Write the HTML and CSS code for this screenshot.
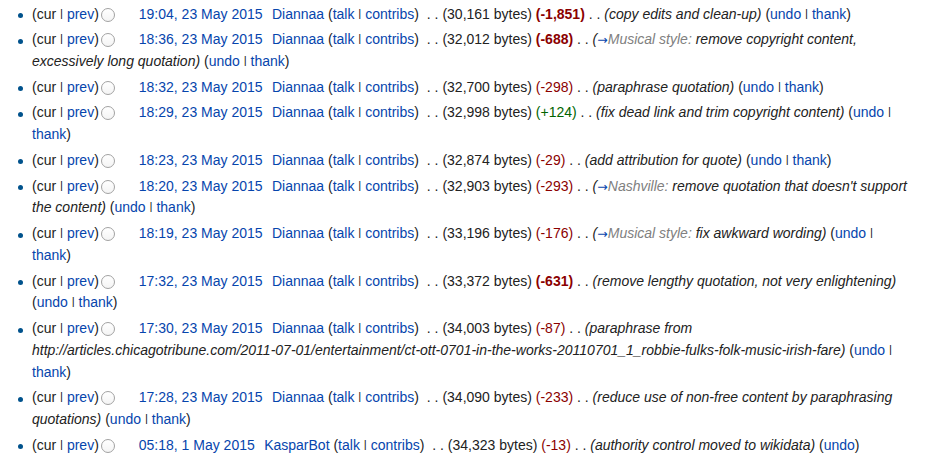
FILE: index.html
```html
<!DOCTYPE html>
<html lang="en">
<head>
<meta charset="utf-8">
<title>Revision history</title>
<link rel="stylesheet" href="styles.css">
</head>
<body>
<main class="history">
<ul class="revisions">
<li><span class="histlinks">(cur <span class="bar">|</span> <a href="#">prev</a>)</span><input type="radio" name="oldid" class="pick"><a class="date" href="#">19:04, 23 May 2015</a> <span class="user"><a href="#">Diannaa</a> <span class="tools">(<a href="#">talk</a> <span class="bar">|</span> <a href="#">contribs</a>)</span></span> <span class="sep">. .</span> <span class="size">(30,161 bytes)</span> <strong class="delta neg">(-1,851)</strong> <span class="sep">. .</span> <span class="comment">(copy edits and clean-up)</span> <span class="tools">(<a href="#">undo</a> <span class="bar">|</span> <a href="#">thank</a>)</span></li>
<li><span class="histlinks">(cur <span class="bar">|</span> <a href="#">prev</a>)</span><input type="radio" name="oldid" class="pick"><a class="date" href="#">18:36, 23 May 2015</a> <span class="user"><a href="#">Diannaa</a> <span class="tools">(<a href="#">talk</a> <span class="bar">|</span> <a href="#">contribs</a>)</span></span> <span class="sep">. .</span> <span class="size">(32,012 bytes)</span> <strong class="delta neg">(-688)</strong> <span class="sep">. .</span> <span class="comment">(<a class="section" href="#">→</a><span class="autocomment">Musical style:</span> remove copyright content, excessively long quotation)</span> <span class="tools">(<a href="#">undo</a> <span class="bar">|</span> <a href="#">thank</a>)</span></li>
<li><span class="histlinks">(cur <span class="bar">|</span> <a href="#">prev</a>)</span><input type="radio" name="oldid" class="pick"><a class="date" href="#">18:32, 23 May 2015</a> <span class="user"><a href="#">Diannaa</a> <span class="tools">(<a href="#">talk</a> <span class="bar">|</span> <a href="#">contribs</a>)</span></span> <span class="sep">. .</span> <span class="size">(32,700 bytes)</span> <span class="delta neg">(-298)</span> <span class="sep">. .</span> <span class="comment">(paraphrase quotation)</span> <span class="tools">(<a href="#">undo</a> <span class="bar">|</span> <a href="#">thank</a>)</span></li>
<li><span class="histlinks">(cur <span class="bar">|</span> <a href="#">prev</a>)</span><input type="radio" name="oldid" class="pick"><a class="date" href="#">18:29, 23 May 2015</a> <span class="user"><a href="#">Diannaa</a> <span class="tools">(<a href="#">talk</a> <span class="bar">|</span> <a href="#">contribs</a>)</span></span> <span class="sep">. .</span> <span class="size">(32,998 bytes)</span> <span class="delta pos">(+124)</span> <span class="sep">. .</span> <span class="comment">(fix dead link and trim copyright content)</span> <span class="tools">(<a href="#">undo</a> <span class="bar">|</span> <a href="#">thank</a>)</span></li>
<li><span class="histlinks">(cur <span class="bar">|</span> <a href="#">prev</a>)</span><input type="radio" name="oldid" class="pick"><a class="date" href="#">18:23, 23 May 2015</a> <span class="user"><a href="#">Diannaa</a> <span class="tools">(<a href="#">talk</a> <span class="bar">|</span> <a href="#">contribs</a>)</span></span> <span class="sep">. .</span> <span class="size">(32,874 bytes)</span> <span class="delta neg">(-29)</span> <span class="sep">. .</span> <span class="comment">(add attribution for quote)</span> <span class="tools">(<a href="#">undo</a> <span class="bar">|</span> <a href="#">thank</a>)</span></li>
<li><span class="histlinks">(cur <span class="bar">|</span> <a href="#">prev</a>)</span><input type="radio" name="oldid" class="pick"><a class="date" href="#">18:20, 23 May 2015</a> <span class="user"><a href="#">Diannaa</a> <span class="tools">(<a href="#">talk</a> <span class="bar">|</span> <a href="#">contribs</a>)</span></span> <span class="sep">. .</span> <span class="size">(32,903 bytes)</span> <span class="delta neg">(-293)</span> <span class="sep">. .</span> <span class="comment">(<a class="section" href="#">→</a><span class="autocomment">Nashville:</span> remove quotation that doesn't support the content)</span> <span class="tools">(<a href="#">undo</a> <span class="bar">|</span> <a href="#">thank</a>)</span></li>
<li><span class="histlinks">(cur <span class="bar">|</span> <a href="#">prev</a>)</span><input type="radio" name="oldid" class="pick"><a class="date" href="#">18:19, 23 May 2015</a> <span class="user"><a href="#">Diannaa</a> <span class="tools">(<a href="#">talk</a> <span class="bar">|</span> <a href="#">contribs</a>)</span></span> <span class="sep">. .</span> <span class="size">(33,196 bytes)</span> <span class="delta neg">(-176)</span> <span class="sep">. .</span> <span class="comment">(<a class="section" href="#">→</a><span class="autocomment">Musical style:</span> fix awkward wording)</span> <span class="tools">(<a href="#">undo</a> <span class="bar">|</span> <a href="#">thank</a>)</span></li>
<li><span class="histlinks">(cur <span class="bar">|</span> <a href="#">prev</a>)</span><input type="radio" name="oldid" class="pick"><a class="date" href="#">17:32, 23 May 2015</a> <span class="user"><a href="#">Diannaa</a> <span class="tools">(<a href="#">talk</a> <span class="bar">|</span> <a href="#">contribs</a>)</span></span> <span class="sep">. .</span> <span class="size">(33,372 bytes)</span> <strong class="delta neg">(-631)</strong> <span class="sep">. .</span> <span class="comment">(remove lengthy quotation, not very enlightening)</span> <span class="tools">(<a href="#">undo</a> <span class="bar">|</span> <a href="#">thank</a>)</span></li>
<li><span class="histlinks">(cur <span class="bar">|</span> <a href="#">prev</a>)</span><input type="radio" name="oldid" class="pick"><a class="date" href="#">17:30, 23 May 2015</a> <span class="user"><a href="#">Diannaa</a> <span class="tools">(<a href="#">talk</a> <span class="bar">|</span> <a href="#">contribs</a>)</span></span> <span class="sep">. .</span> <span class="size">(34,003 bytes)</span> <span class="delta neg">(-87)</span> <span class="sep">. .</span> <span class="comment">(paraphrase from http://articles.chicagotribune.com/2011-07-01/entertainment/ct-ott-0701-in-the-works-20110701_1_robbie-fulks-folk-music-irish-fare)</span> <span class="tools">(<a href="#">undo</a> <span class="bar">|</span> <a href="#">thank</a>)</span></li>
<li><span class="histlinks">(cur <span class="bar">|</span> <a href="#">prev</a>)</span><input type="radio" name="oldid" class="pick"><a class="date" href="#">17:28, 23 May 2015</a> <span class="user"><a href="#">Diannaa</a> <span class="tools">(<a href="#">talk</a> <span class="bar">|</span> <a href="#">contribs</a>)</span></span> <span class="sep">. .</span> <span class="size">(34,090 bytes)</span> <span class="delta neg">(-233)</span> <span class="sep">. .</span> <span class="comment">(reduce use of non-free content by paraphrasing quotations)</span> <span class="tools">(<a href="#">undo</a> <span class="bar">|</span> <a href="#">thank</a>)</span></li>
<li><span class="histlinks">(cur <span class="bar">|</span> <a href="#">prev</a>)</span><input type="radio" name="oldid" class="pick"><a class="date" href="#">05:18, 1 May 2015</a> <span class="user"><a href="#">KasparBot</a> <span class="tools">(<a href="#">talk</a> <span class="bar">|</span> <a href="#">contribs</a>)</span></span> <span class="sep">. .</span> <span class="size">(34,323 bytes)</span> <span class="delta neg">(-13)</span> <span class="sep">. .</span> <span class="comment">(authority control moved to wikidata)</span> <span class="tools">(<a href="#">undo</a>)</span></li>
</ul>
</main>
</body>
</html>
```

FILE: styles.css
```css
html, body {
  margin: 0;
  background: #fff;
}

body {
  font-family: "Liberation Sans", Arial, Helvetica, sans-serif;
  font-size: 14px;
  color: #222;
}

a {
  color: #0645ad;
  text-decoration: none;
}

.history {
  padding: 3.6px 16px 0 32px;
}

.revisions {
  list-style: none;
  margin: 0;
  padding: 0;
}

.revisions li {
  position: relative;
  line-height: 21.8px;
  margin-bottom: 3.9px;
}

/* small round bullet in front of each revision */
.revisions li::before {
  content: "";
  position: absolute;
  left: -14.5px;
  top: 9.5px;
  width: 5px;
  height: 5px;
  border-radius: 50%;
  background: #00528c;
}

/* short cap-height pipe between paired links */
.bar {
  font-size: 11.5px;
  vertical-align: 2px;
  line-height: 1;
  color: #222;
}

.pick {
  appearance: none;
  -webkit-appearance: none;
  display: inline-block;
  box-sizing: border-box;
  width: 14px;
  height: 14px;
  margin: 0 24px 0 2px;
  border: 1px solid #a2a2a2;
  border-radius: 50%;
  background: linear-gradient(#fff, #f4f4f4);
  vertical-align: -3px;
}

.user {
  margin-left: 5.5px;
  margin-right: 4px;
}

.delta.neg {
  color: #8b0000;
}

.delta.pos {
  color: #006400;
}

strong.delta {
  font-weight: bold;
}

.comment {
  font-style: italic;
}

.comment .section {
  font-family: "DejaVu Sans", sans-serif;
  font-style: normal;
  font-size: 12.5px;
}

.autocomment {
  color: #808080;
}
```
